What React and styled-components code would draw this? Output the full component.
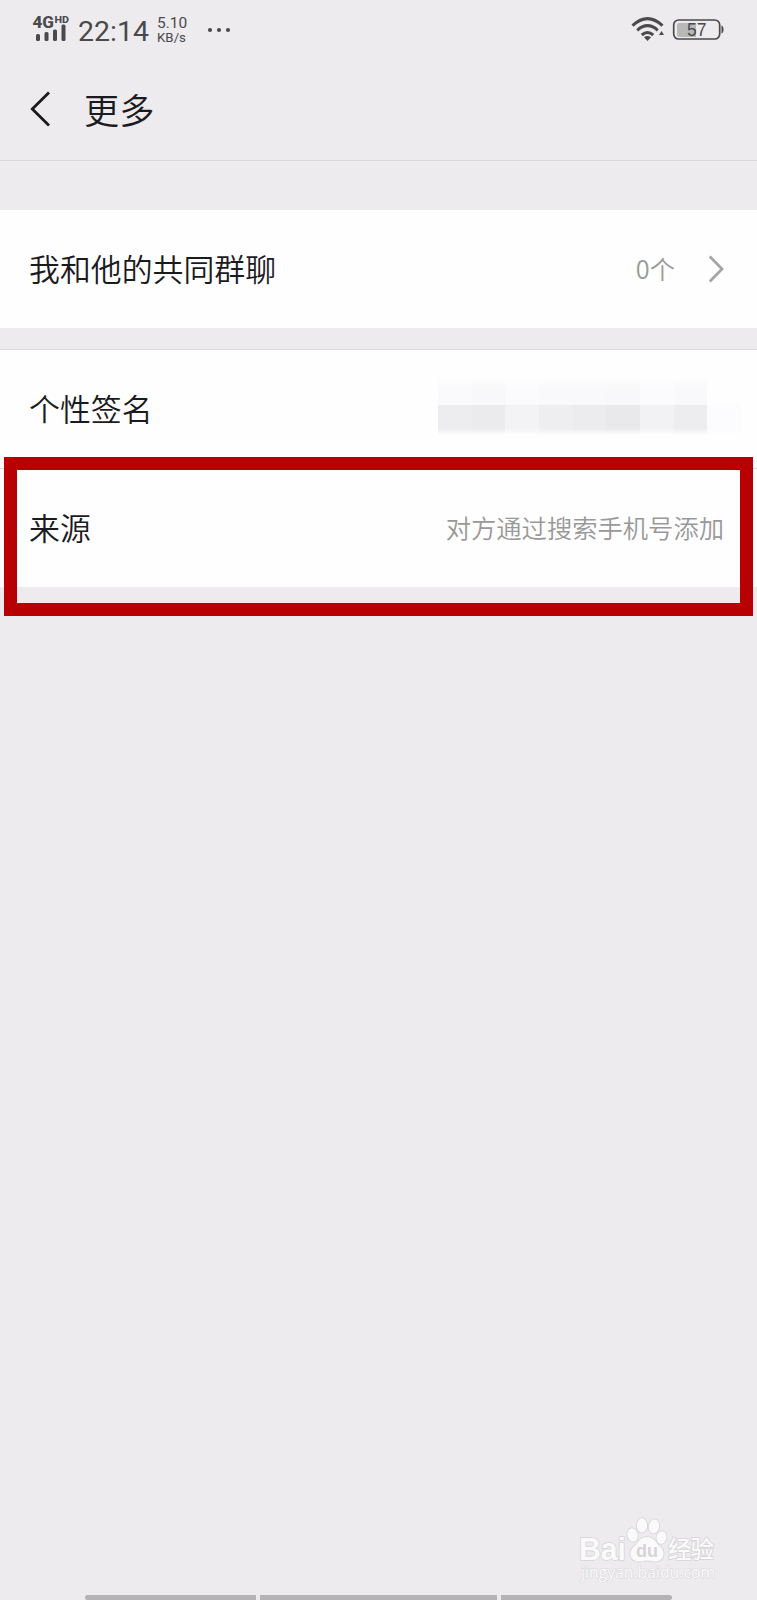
import React from 'react';
import styled, { createGlobalStyle } from 'styled-components';

const GlobalStyle = createGlobalStyle`
  * {
    box-sizing: border-box;
  }

  body {
    margin: 0;
    background: #edebee;
  }
`;

const Screen = styled.div`
  position: relative;
  display: flex;
  flex-direction: column;
  width: 757px;
  height: 1600px;
  overflow: hidden;
  background: #edebee;
  color: #1b1a1e;
  font-family: 'Noto Sans CJK SC', sans-serif;
`;

const StatusBar = styled.header`
  display: flex;
  justify-content: space-between;
  height: 60px;
  padding: 0 33px 0 32px;
  color: #4a494c;
  font-family: Roboto, sans-serif;
`;

const StatusGroup = styled.div`
  display: flex;
  align-items: flex-start;
`;

const SignalIcon = styled.svg`
  width: 38px;
  height: 32px;
  margin-top: 14px;
  overflow: visible;
  font-family: Roboto, sans-serif;
  font-weight: 800;
`;

const Clock = styled.div`
  margin: 15px 0 0 8px;
  width: 72px;
  font-size: 28.5px;
  line-height: 34px;
  white-space: nowrap;
`;

const NetSpeed = styled.div`
  display: flex;
  flex-direction: column;
  width: 44px;
  margin: 16px 0 0 7px;
  font-size: 15.5px;
  line-height: 15px;

  span:last-child {
    font-size: 13.3px;
    line-height: 13px;
  }
`;

const MoreDots = styled.svg`
  width: 26px;
  height: 6px;
  margin: 27px 0 0 5px;
`;

const WifiIcon = styled.svg`
  width: 34px;
  height: 26px;
  margin-top: 16px;
`;

const BatteryIcon = styled.svg`
  width: 52px;
  height: 24px;
  margin: 18px 0 0 7px;
`;

const TitleBar = styled.div`
  display: flex;
  align-items: center;
  height: 101px;
  padding: 0 0 3px 30px;
  border-bottom: 1px solid #d9d7da;
`;

const BackIcon = styled.svg`
  width: 20px;
  height: 36px;
  margin-top: 1px;
`;

const Title = styled.h1`
  margin: 0 0 0 34px;
  font-size: 35.2px;
  font-weight: 350;
  line-height: 50px;
`;

const Group = styled.section`
  margin-top: ${({ $gap }) => $gap}px;
  background: #fefefe;
`;

const Row = styled.div`
  display: flex;
  align-items: center;
  justify-content: space-between;
  height: ${({ $height }) => $height}px;
  padding: 0 ${({ $right }) => $right || 33}px 2px 29px;
  border-top: ${({ $divided }) => ($divided ? '1px solid #dedcdf' : 'none')};
`;

const Label = styled.span`
  font-size: 30.9px;
  font-weight: 350;
  line-height: 44px;
`;

const Value = styled.span`
  display: flex;
  align-items: center;
  color: #999;
  font-size: 25.3px;
  font-weight: 350;
  line-height: 36px;
`;

const ArrowIcon = styled.svg`
  width: 16px;
  height: 30px;
  margin: 2px 0 0 33px;
`;

const Mosaic = styled.div`
  display: grid;
  grid-template-columns: repeat(9, 33.7px);
  grid-template-rows: 28px 30px;
  margin-bottom: 5px;
`;

const MosaicCell = styled.div`
  background: linear-gradient(
    ${({ $fade }) => ($fade === 'top' ? 'to top' : 'to bottom')},
    ${({ $color }) => $color} ${({ $fade }) => ($fade === 'top' ? '50%' : '78%')},
    #fefefe
  );
`;

const Highlight = styled.div`
  position: absolute;
  top: 457px;
  left: 4px;
  width: 748.5px;
  height: 159px;
  border: 13px solid #b90000;
`;

const Watermark = styled.svg`
  position: absolute;
  top: 1512px;
  left: 575px;
  width: 150px;
  height: 76px;
`;

const NavHints = styled.footer`
  display: flex;
  justify-content: center;
  gap: 4px;
  height: 5px;
  margin-top: auto;
`;

const NavHint = styled.div`
  width: ${({ $width }) => $width}px;
  background: #b4b2b5;
  border-radius: ${({ $radius }) => $radius || '0'};
`;

const mosaicRows = [
  {
    fade: 'top',
    colors: ['#faf9fb', '#f8f7f9', '#fbfafc', '#f9f8fa', '#f9f8fa', '#f8f7f9', '#fbfafc', '#f9f8fa', '#fefefe'],
  },
  {
    fade: 'bottom',
    colors: ['#edecee', '#ebeaec', '#f3f2f4', '#eeedef', '#ecebed', '#e9e8ea', '#f2f1f3', '#edecee', '#fcfbfd'],
  },
];

const Signal = () => (
  <SignalIcon viewBox="0 0 38 32" fill="#4a494c">
    <text x="0.5" y="14" fontSize="17" textLength="21.5" lengthAdjust="spacingAndGlyphs">4G</text>
    <text x="22.5" y="9" fontSize="9.5" textLength="14.5" lengthAdjust="spacingAndGlyphs">HD</text>
    <rect x="4" y="20" width="4" height="7" rx="1.5" />
    <rect x="12.5" y="18" width="4" height="9" rx="1.5" />
    <rect x="21" y="15.5" width="4" height="11.5" rx="1.5" />
    <rect x="29.5" y="10.5" width="4" height="16.5" rx="1.5" />
  </SignalIcon>
);

const Wifi = () => (
  <WifiIcon viewBox="0 0 34 26" fill="none" stroke="#4a494c" strokeWidth="3">
    <path d="M1.5 9.6Q16.5 -4.4 31.5 9.6" />
    <path d="M6.2 14.3Q16.5 5 26.8 14.3" />
    <path d="M10.8 19Q16.5 14 22.2 19" />
    <path d="M13 21.3Q16.5 18.5 20 21.3L16.5 25Z" fill="#4a494c" stroke="none" />
    <path d="M28 19L30.5 15L33 19Z" fill="#4a494c" stroke="none" />
  </WifiIcon>
);

const Battery = () => (
  <BatteryIcon viewBox="0 0 52 24">
    <rect x="1.7" y="2" width="46" height="19" rx="5" fill="none" stroke="#4a494c" strokeWidth="1.7" />
    <path d="M7 5H24V19H7Q5 19 5 17V7Q5 5 7 5Z" fill="#b9b8b9" />
    <path d="M49.5 7.5Q51.5 8 51.5 11.5Q51.5 15 49.5 15.5Z" fill="#4a494c" />
    <text x="24.8" y="17.8" textAnchor="middle" fill="#4a494c" fontSize="17.5" fontFamily="'Liberation Sans', sans-serif">
      57
    </text>
  </BatteryIcon>
);

const BaiduMark = () => (
  <Watermark viewBox="0 0 150 76" fill="#fafafa" stroke="#d6d4d7" strokeWidth="1.6" paintOrder="stroke">
    <text
      x="4"
      y="48"
      fontFamily="'Liberation Sans', sans-serif"
      fontWeight="700"
      fontSize="31"
      textLength="47"
      lengthAdjust="spacingAndGlyphs"
    >
      Bai
    </text>
    <ellipse cx="57.5" cy="23" rx="5.2" ry="6.8" transform="rotate(-12 57.5 23)" />
    <ellipse cx="67" cy="13.5" rx="5.2" ry="7.2" />
    <ellipse cx="79" cy="14.5" rx="5.2" ry="7" transform="rotate(10 79 14.5)" />
    <ellipse cx="86.5" cy="25.5" rx="5" ry="6.4" transform="rotate(12 86.5 25.5)" />
    <path d="M72 25C65 25 63 31 58.5 35C53 40 55 49 63 49.5C68 49.8 69 48.5 72.5 48.5C76 48.5 77 49.8 81 49.5C89 49 91 40 85.5 35C81 31 79 25 72 25Z" />
    <text
      x="61"
      y="45"
      fontFamily="'Liberation Sans', sans-serif"
      fontWeight="700"
      fontSize="19"
      textLength="22"
      lengthAdjust="spacingAndGlyphs"
      fill="#d6d4d7"
      stroke="none"
    >
      du
    </text>
    <text x="93" y="46" fontFamily="'Noto Sans CJK SC', sans-serif" fontWeight="500" fontSize="23.5" textLength="46">
      经验
    </text>
    <text
      x="6"
      y="65.5"
      fontFamily="'Open Sans', sans-serif"
      fontSize="15.5"
      stroke="#d9d7da"
      strokeWidth="1.2"
      textLength="134"
      lengthAdjust="spacingAndGlyphs"
    >
      jingyan.baidu.com
    </text>
  </Watermark>
);

const App = () => {
  return (
    <Screen>
      <GlobalStyle />
      <StatusBar>
        <StatusGroup>
          <Signal />
          <Clock>22:14</Clock>
          <NetSpeed>
            <span>5.10</span>
            <span>KB/s</span>
          </NetSpeed>
          <MoreDots viewBox="0 0 26 6" fill="#4a494c">
            <circle cx="4" cy="3" r="2.1" />
            <circle cx="13" cy="3" r="2.1" />
            <circle cx="22" cy="3" r="2.1" />
          </MoreDots>
        </StatusGroup>
        <StatusGroup>
          <Wifi />
          <Battery />
        </StatusGroup>
      </StatusBar>

      <TitleBar>
        <BackIcon viewBox="0 0 20 36" fill="none" stroke="#1b1a1e" strokeWidth="2.8">
          <path d="M19 1.5L2.3 18L19 34.5" />
        </BackIcon>
        <Title>更多</Title>
      </TitleBar>

      <Group $gap={49}>
        <Row $height={118}>
          <Label>我和他的共同群聊</Label>
          <Value>
            0个
            <ArrowIcon viewBox="0 0 16 30" fill="none" stroke="#a5a4a6" strokeWidth="2.8">
              <path d="M1.8 2.5L14 15L1.8 27.5" />
            </ArrowIcon>
          </Value>
        </Row>
      </Group>

      <Group $gap={21}>
        <Row $height={119} $right={16} $divided>
          <Label>个性签名</Label>
          <Mosaic>
            {mosaicRows.map((row) =>
              row.colors.map((color, index) => (
                <MosaicCell key={row.fade + index} $fade={row.fade} $color={color} />
              ))
            )}
          </Mosaic>
        </Row>
        <Row $height={119} $divided>
          <Label>来源</Label>
          <Value>对方通过搜索手机号添加</Value>
        </Row>
      </Group>

      <Highlight />
      <BaiduMark />

      <NavHints>
        <NavHint $width={171} $radius="4px 0 0 4px" />
        <NavHint $width={237} />
        <NavHint $width={171} $radius="0 4px 4px 0" />
      </NavHints>
    </Screen>
  );
};

export default App;
